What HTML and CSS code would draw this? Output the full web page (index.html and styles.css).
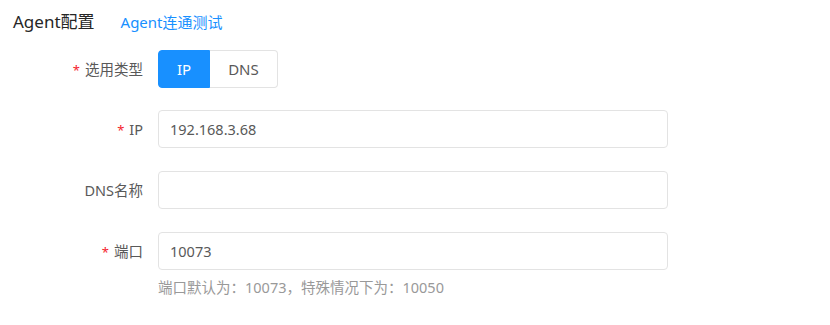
FILE: index.html
```html
<!DOCTYPE html>
<html lang="zh-CN">
<head>
    <meta charset="UTF-8">
    <meta name="viewport" content="width=device-width, initial-scale=1.0">
    <title>Agent配置</title>
    <link rel="stylesheet" href="styles.css">
</head>
<body>

<div class="header">
    <span class="title">Agent配置</span>
    <a class="test-link" href="#">Agent连通测试</a>
</div>

<div class="form">
    <div class="form-item radio-item">
        <label class="form-label"><span class="required">*</span>选用类型</label>
        <div class="form-control">
            <div class="radio-group">
                <span class="radio-btn active">IP</span>
                <span class="radio-btn">DNS</span>
            </div>
        </div>
    </div>

    <div class="form-item">
        <label class="form-label" for="ip"><span class="required">*</span>IP</label>
        <div class="form-control">
            <input type="text" id="ip" value="192.168.3.68">
        </div>
    </div>

    <div class="form-item">
        <label class="form-label" for="dns">DNS名称</label>
        <div class="form-control">
            <input type="text" id="dns" value="">
        </div>
    </div>

    <div class="form-item">
        <label class="form-label" for="port"><span class="required">*</span>端口</label>
        <div class="form-control">
            <input type="text" id="port" value="10073">
            <div class="help">端口默认为：10073，特殊情况下为：10050</div>
        </div>
    </div>
</div>

</body>
</html>
```

FILE: styles.css
```css
body { font-family: "Noto Sans", "Noto Sans CJK SC", sans-serif; background-color: #fff; color: #333; margin: 0; font-size: 14.5px; }
.header { box-sizing: border-box; height: 50px; padding: 10px 13px 16px; line-height: 24px; display: flex; align-items: center; }
.title { font-size: 17px; color: #262626; }
.test-link { margin-left: 26px; color: #1890ff; text-decoration: none; font-size: 15px; }
.form { width: 668px; }
.form-item { display: flex; align-items: flex-start; margin-bottom: 23px; }
.radio-item { margin-bottom: 22px; }
.form-label { width: 143px; height: 38px; flex-shrink: 0; text-align: right; line-height: 38px; color: #595959; overflow: hidden; }
.required { color: #f5222d; margin-right: 5px; font-size: 13px; }
.form-control { margin-left: 15px; flex: 1; }
.radio-group { display: inline-flex; height: 38px; }
.radio-btn { display: flex; align-items: center; padding: 0 18px; border: 1px solid #e3e3e3; color: #595959; font-size: 15px; line-height: 36px; }
.radio-btn:first-child { border-radius: 4px 0 0 4px; }
.radio-btn:last-child { border-left: none; border-radius: 0 4px 4px 0; }
.radio-btn.active { background-color: #1890ff; border-color: #1890ff; color: #fff; }
input { display: block; box-sizing: border-box; width: 100%; height: 38px; padding: 0 11px; border: 1px solid #e3e3e3; border-radius: 4px; font-family: inherit; font-size: 14.5px; color: #595959; outline: none; }
.help { margin-top: 6px; line-height: 22px; color: #999; }
```
